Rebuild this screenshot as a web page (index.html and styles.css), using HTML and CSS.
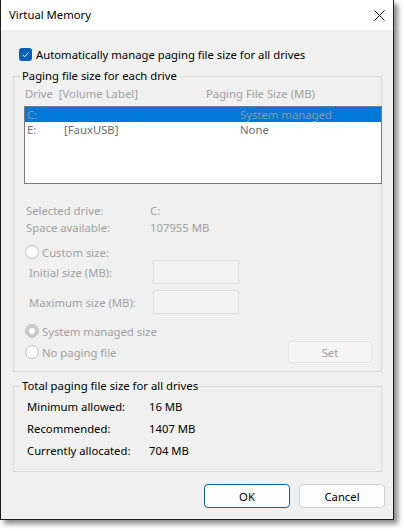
FILE: index.html
```html
<!DOCTYPE html>
<html>
<head>
<meta charset="utf-8">
<link rel="stylesheet" href="styles.css">
</head>
<body>
<div class="window">
  <div class="titlebar">
    <span class="title">Virtual Memory</span>
    <svg class="close" width="11" height="11" viewBox="0 0 11 11"><path d="M0.5 0.5 L10.5 10.5 M10.5 0.5 L0.5 10.5" stroke="#1a1a1a" stroke-width="1" fill="none"/></svg>
  </div>
  <div class="content">
    <div class="check-row">
      <span class="checkbox"><svg width="13" height="13" viewBox="0 0 13 13"><path d="M3.6 6.8 L5.6 8.7 L9.5 4.6" stroke="#fff" stroke-width="1" fill="none"/></svg></span>
      <span class="check-label">Automatically manage paging file size for all drives</span>
    </div>

    <fieldset class="group group-drives">
      <legend>Paging file size for each drive</legend>
      <div class="list-header disabled">
        <span>Drive&nbsp;&nbsp;[Volume Label]</span>
        <span>Paging File Size (MB)</span>
      </div>
      <div class="listbox">
        <div class="list-row selected"><span>C:</span><span></span><span>System managed</span></div>
        <div class="list-row"><span>E:</span><span>[FauxUSB]</span><span>None</span></div>
      </div>
      <div class="info disabled">
        <div class="info-row"><span>Selected drive:</span><span>C:</span></div>
        <div class="info-row"><span>Space available:</span><span>107955 MB</span></div>
      </div>
      <div class="radio-row custom-row disabled"><span class="radio"></span><span>Custom size:</span></div>
      <div class="size-row initial-row disabled"><span>Initial size (MB):</span><span class="textbox"></span></div>
      <div class="size-row max-row disabled"><span>Maximum size (MB):</span><span class="textbox"></span></div>
      <div class="radio-row system-row disabled"><span class="radio checked"></span><span>System managed size</span></div>
      <div class="radio-row nopage-row disabled"><span class="radio"></span><span>No paging file</span><span class="btn btn-set">Set</span></div>
    </fieldset>

    <fieldset class="group group-total">
      <legend>Total paging file size for all drives</legend>
      <div class="total-row"><span>Minimum allowed:</span><span>16 MB</span></div>
      <div class="total-row"><span>Recommended:</span><span>1407 MB</span></div>
      <div class="total-row"><span>Currently allocated:</span><span>704 MB</span></div>
    </fieldset>

    <div class="buttons">
      <span class="btn btn-ok">OK</span>
      <span class="btn btn-cancel">Cancel</span>
    </div>
  </div>
</div>
</body>
</html>
```

FILE: styles.css
```css
html, body {
  margin: 0;
  padding: 0;
  background: #ffffff;
}
body {
  font-family: "Noto Sans", "Open Sans", sans-serif;
  font-size: 11.3px;
  color: #000;
  width: 404px;
  height: 531px;
  overflow: hidden;
}
.window {
  width: 392px;
  border: 1px solid #1c1c1c;
  border-top: none;
  background: #f0f0f0;
  box-shadow: 4px 4px 5px rgba(0,0,0,0.45);
}
.titlebar {
  height: 30px;
  background: #ffffff;
  display: flex;
  align-items: center;
  justify-content: space-between;
  padding: 0 8px 0 8px;
}
.title {
  line-height: 16px;
}
.close {
  display: block;
}
.content {
  padding: 17px 0 11px 0;
}
.check-row {
  display: flex;
  align-items: center;
  height: 15px;
  padding-left: 18px;
}
.checkbox {
  width: 13px;
  height: 13px;
  border-radius: 3px;
  background: #005fb8;
  display: flex;
  margin-right: 4px;
}
.check-label {
  line-height: 15px;
}
.group {
  margin: 6px 11px 0 12px;
  padding: 0;
  border: 1px solid #dcdcdc;
  min-width: 0;
}
.group legend {
  margin-left: 6px;
  padding: 0 2px;
  line-height: 16px;
  height: 16px;
}
.disabled {
  color: #a0a0a0;
}
.list-header {
  display: grid;
  grid-template-columns: 181px 1fr;
  margin-top: 2px;
  padding-left: 11px;
  line-height: 16px;
}
.listbox {
  margin: 4px 0 0 10px;
  width: 356px;
  height: 76px;
  border: 1px solid #7a7a7a;
  background: #ffffff;
}
.list-row {
  display: grid;
  grid-template-columns: 37px 176px 1fr;
  height: 15px;
  line-height: 15px;
  padding-left: 2px;
  color: #6d6d6d;
}
.list-row.selected {
  background: #0078d7;
  color: #8c98a6;
}
.info {
  margin-top: 18px;
}
.info-row {
  display: grid;
  grid-template-columns: 124px 1fr;
  padding-left: 12px;
  line-height: 17px;
  height: 17px;
}
.radio-row {
  display: flex;
  align-items: center;
  padding-left: 11px;
  height: 16px;
}
.radio {
  width: 12px;
  height: 12px;
  border: 1px solid #c4c4c4;
  border-radius: 50%;
  background: #fbfbfb;
  margin-right: 3px;
  position: relative;
}
.radio.checked {
  background: #c8c8c8;
  border-color: #c8c8c8;
}
.radio.checked::after {
  content: "";
  position: absolute;
  left: 3px;
  top: 3px;
  width: 6px;
  height: 6px;
  border-radius: 50%;
  background: #ffffff;
}
.custom-row {
  margin-top: 8px;
}
.size-row {
  display: grid;
  grid-template-columns: 124px 86px;
  align-items: center;
  padding-left: 15px;
  height: 24px;
}
.max-row {
  margin-top: 6px;
}
.textbox {
  display: block;
  height: 22px;
  border: 1px solid #e0e0e0;
  background: #f3f3f3;
}
.system-row {
  margin-top: 9px;
}
.nopage-row {
  margin-top: 2px;
  height: 22px;
  margin-bottom: 8px;
}
.btn {
  display: flex;
  align-items: center;
  justify-content: center;
  box-sizing: border-box;
  border-radius: 4px;
}
.btn-set {
  margin-left: auto;
  margin-right: 9px;
  width: 84px;
  height: 22px;
  background: #f5f5f5;
  border: 1px solid #e6e6e6;
  color: #a0a0a0;
}
.group-total {
  margin-top: 6px;
}
.group-total .total-row:first-of-type {
  margin-top: 2px;
}
.total-row {
  display: grid;
  grid-template-columns: 122px 1fr;
  padding-left: 13px;
  height: 22px;
  line-height: 22px;
}
.group-total .total-row:last-child {
  margin-bottom: 9px;
}
.buttons {
  display: flex;
  justify-content: flex-end;
  gap: 9px;
  margin: 12px 8px 0 0;
}
.btn-ok, .btn-cancel {
  width: 86px;
  height: 24px;
  background: #fdfdfd;
}
.btn-ok {
  border: 1px solid #005fb8;
}
.btn-cancel {
  border: 1px solid #d0d0d0;
}
```
